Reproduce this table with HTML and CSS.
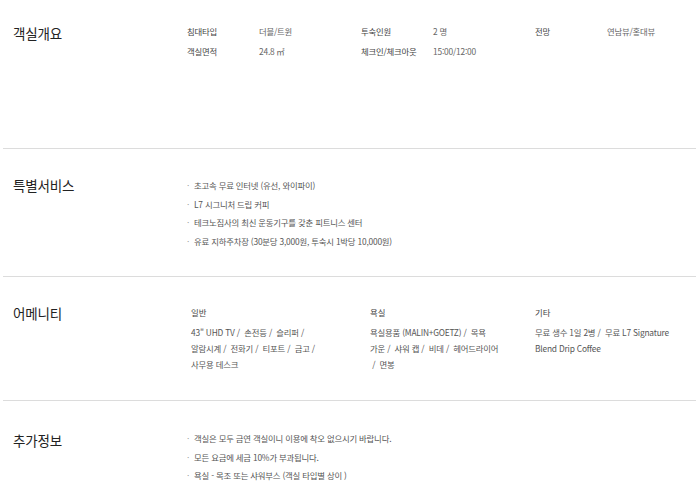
FILE: index.html
```html
<!DOCTYPE html>
<html lang="ko">
<head>
<meta charset="utf-8">
<link rel="stylesheet" href="styles.css">
</head>
<body>
<div class="page">
  <section class="sec sec-overview">
    <h2 class="sec-title">객실개요</h2>
    <div class="sec-body">
      <div class="specs">
        <div class="spec"><span class="lbl">침대타입</span><span class="val">더블/트윈</span></div>
        <div class="spec"><span class="lbl">투숙인원</span><span class="val">2 명</span></div>
        <div class="spec"><span class="lbl">전망</span><span class="val">연남뷰/홍대뷰</span></div>
        <div class="spec"><span class="lbl">객실면적</span><span class="val">24.8 ㎡</span></div>
        <div class="spec"><span class="lbl">체크인/체크아웃</span><span class="val">15:00/12:00</span></div>
      </div>
    </div>
  </section>
  <section class="sec sec-service">
    <h2 class="sec-title">특별서비스</h2>
    <div class="sec-body">
      <ul class="bullets">
        <li>초고속 무료 인터넷 (유선, 와이파이)</li>
        <li>L7 시그니처 드립 커피</li>
        <li>테크노짐사의 최신 운동기구를 갖춘 피트니스 센터</li>
        <li>유료 지하주차장 (30분당 3,000원, 투숙시 1박당 10,000원)</li>
      </ul>
    </div>
  </section>
  <section class="sec sec-amenity">
    <h2 class="sec-title">어메니티</h2>
    <div class="sec-body">
      <div class="amenities">
        <div class="amen">
          <h3 class="amen-head">일반</h3>
          <p class="amen-text">43" UHD TV /&nbsp; 손전등 /&nbsp; 슬리퍼 /<br>알람시계 /&nbsp; 전화기 /&nbsp; 티포트 /&nbsp; 금고 /<br>사무용 데스크</p>
        </div>
        <div class="amen">
          <h3 class="amen-head">욕실</h3>
          <p class="amen-text">욕실용품 (MALIN+GOETZ) /&nbsp; 목욕<br>가운 /&nbsp; 샤워 캡 /&nbsp; 비데 /&nbsp; 헤어드라이어<br>&nbsp;/&nbsp; 면봉</p>
        </div>
        <div class="amen">
          <h3 class="amen-head">기타</h3>
          <p class="amen-text">무료 생수 1일 2병 /&nbsp; 무료 L7 Signature<br>Blend Drip Coffee</p>
        </div>
      </div>
    </div>
  </section>
  <section class="sec sec-extra">
    <h2 class="sec-title">추가정보</h2>
    <div class="sec-body">
      <ul class="bullets">
        <li>객실은 모두 금연 객실이니 이용에 착오 없으시기 바랍니다.</li>
        <li>모든 요금에 세금 10%가 부과됩니다.</li>
        <li>욕실 - 목조 또는 샤워부스 (객실 타입별 상이 )</li>
      </ul>
    </div>
  </section>
</div>
</body>
</html>
```

FILE: styles.css
```css
* { box-sizing: border-box; }
html, body {
  margin: 0;
  padding: 0;
  background: #fff;
}
body {
  font-family: "Noto Sans CJK KR", "Noto Sans", sans-serif;
  color: #333;
}
.page {
  padding-left: 3px;
  overflow: hidden;
}
.sec {
  display: flex;
  border-bottom: 1px solid #dcdcdc;
  padding-left: 10px;
}
.sec-overview { height: 149px; padding-top: 23px; }
.sec-service { height: 128px; padding-top: 26px; }
.sec-amenity { height: 124px; padding-top: 26px; }
.sec-extra { height: 93px; padding-top: 29px; border-bottom: none; }

.sec-title {
  margin: 0;
  width: 174px;
  flex: none;
  font-size: 13.5px;
  line-height: 20px;
  font-weight: 400;
  color: #222;
  letter-spacing: -0.2px;
}
.sec-body { flex: 1; }

.specs {
  display: grid;
  grid-template-columns: 174px 174px 1fr;
  margin-top: -2px;
}
.spec {
  display: flex;
  font-size: 8.4px;
  line-height: 20px;
  letter-spacing: -0.2px;
}
.lbl { width: 72px; flex: none; color: #444; }
.val { color: #666; }

.bullets {
  list-style: none;
  margin: 0;
  padding: 0;
  margin-top: 1px;
}
.sec-extra .bullets { margin-top: -1px; }
.bullets li {
  position: relative;
  padding-left: 7px;
  font-size: 8.4px;
  line-height: 18.7px;
  color: #555;
  letter-spacing: -0.2px;
}
.bullets li::before {
  content: "·";
  position: absolute;
  left: 0;
  top: 0;
  color: #999;
}

.amenities {
  display: grid;
  grid-template-columns: 179px 165px 1fr;
  padding-left: 4px;
  margin-top: 1px;
}
.amen-head {
  margin: 0 0 4px;
  font-size: 8.4px;
  line-height: 16px;
  font-weight: 400;
  color: #444;
}
.amen-text {
  margin: 0;
  font-size: 8.4px;
  line-height: 16px;
  color: #555;
  white-space: nowrap;
  letter-spacing: -0.2px;
}
```
